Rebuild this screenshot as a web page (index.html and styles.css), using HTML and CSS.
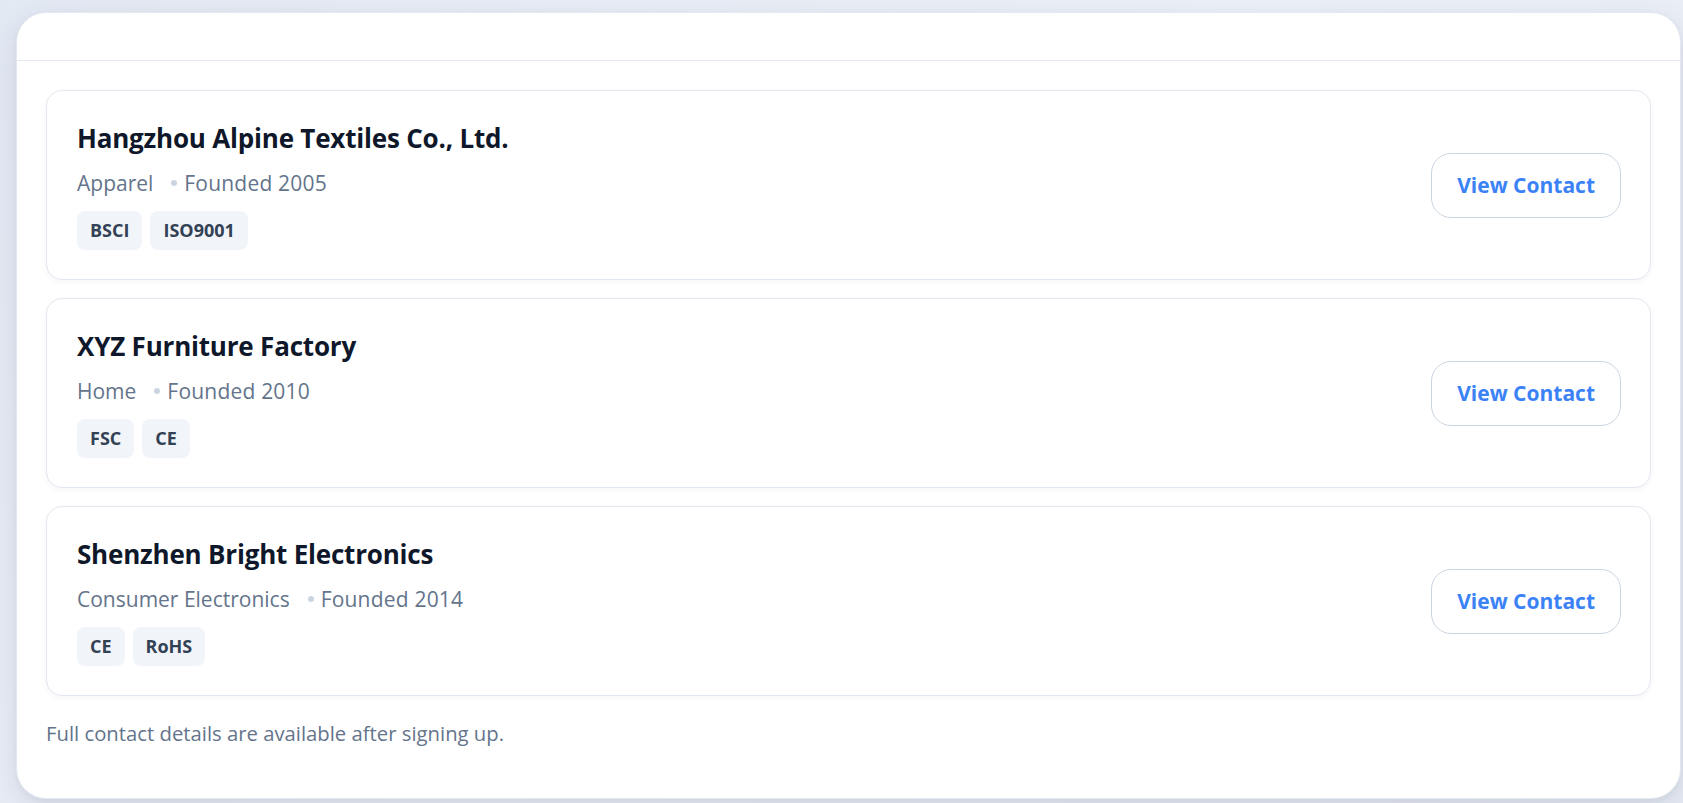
FILE: index.html
```html
<!DOCTYPE html>
<html lang="en">
<head>
<meta charset="utf-8">
<title>Suppliers</title>
<link rel="stylesheet" href="styles.css">
</head>
<body>
<main class="panel">
  <header class="panel-head"></header>
  <section class="panel-body">
    <ul class="supplier-list">
      <li class="supplier">
        <div class="supplier-info">
          <h2 class="supplier-name">Hangzhou Alpine Textiles Co., Ltd.</h2>
          <p class="supplier-meta"><span>Apparel</span><span class="founded">Founded 2005</span></p>
          <div class="tags"><span class="tag">BSCI</span><span class="tag">ISO9001</span></div>
        </div>
        <button class="contact-btn" type="button">View Contact</button>
      </li>
      <li class="supplier">
        <div class="supplier-info">
          <h2 class="supplier-name">XYZ Furniture Factory</h2>
          <p class="supplier-meta"><span>Home</span><span class="founded">Founded 2010</span></p>
          <div class="tags"><span class="tag">FSC</span><span class="tag">CE</span></div>
        </div>
        <button class="contact-btn" type="button">View Contact</button>
      </li>
      <li class="supplier">
        <div class="supplier-info">
          <h2 class="supplier-name">Shenzhen Bright Electronics</h2>
          <p class="supplier-meta"><span>Consumer Electronics</span><span class="founded">Founded 2014</span></p>
          <div class="tags"><span class="tag">CE</span><span class="tag">RoHS</span></div>
        </div>
        <button class="contact-btn" type="button">View Contact</button>
      </li>
    </ul>
    <p class="note">Full contact details are available after signing up.</p>
  </section>
</main>
</body>
</html>
```
FILE: styles.css
```css
* { box-sizing: border-box; }

html, body {
  margin: 0;
  height: 100%;
  overflow: hidden;
}

body {
  background: linear-gradient(135deg, #e3e9f3 0%, #ebeff6 50%, #e6ebf3 100%);
  font-family: "Segoe UI", "Open Sans", "Noto Sans", sans-serif;
  padding: 12px 2px 0 16px;
}

.panel {
  background: #ffffff;
  border: 1px solid #e2e8f0;
  border-radius: 30px;
  box-shadow: 0 12px 32px rgba(30, 41, 80, 0.10), 0 2px 6px rgba(30, 41, 80, 0.05);
  height: 787px;
  overflow: hidden;
}

.panel-head {
  height: 48px;
  border-bottom: 1px solid #e2e8f0;
}

.panel-body {
  padding: 29px 29px 40px;
}

.supplier-list {
  list-style: none;
  margin: 0;
  padding: 0;
  display: flex;
  flex-direction: column;
  gap: 18px;
}

.supplier {
  display: flex;
  align-items: center;
  justify-content: space-between;
  border: 1px solid #e2e8f0;
  border-radius: 16px;
  padding: 30px 29px 29px 30px;
  box-shadow: 0 2px 6px rgba(15, 23, 42, 0.04);
  background: #fff;
}

.supplier-name {
  margin: 0;
  font-size: 26px;
  line-height: 34px;
  font-weight: 700;
  color: #0f172a;
  letter-spacing: -0.2px;
}

.supplier-meta {
  margin: 14px 0 0;
  display: flex;
  align-items: center;
  gap: 18px;
  font-size: 21px;
  line-height: 28px;
  color: #64748b;
}

.founded {
  display: inline-flex;
  align-items: center;
  letter-spacing: 0.2px;
}

.founded::before {
  content: "";
  width: 6px;
  height: 6px;
  border-radius: 50%;
  background: #cbd5e1;
  margin-right: 7px;
}

.tags {
  margin-top: 14px;
  display: flex;
  gap: 8px;
}

.tag {
  background: #f1f5f9;
  color: #334155;
  font-size: 18px;
  font-weight: 700;
  line-height: 19px;
  padding: 10px 13px;
  border-radius: 8px;
}

.contact-btn {
  font-family: inherit;
  background: #fff;
  border: 1px solid #cbd5e1;
  border-radius: 20px;
  color: #3b82f6;
  font-size: 21px;
  font-weight: 700;
  line-height: 27px;
  padding: 18px 25px;
  cursor: pointer;
}

.note {
  margin: 23px 0 0;
  font-size: 20.3px;
  line-height: 28px;
  color: #64748b;
}
```
